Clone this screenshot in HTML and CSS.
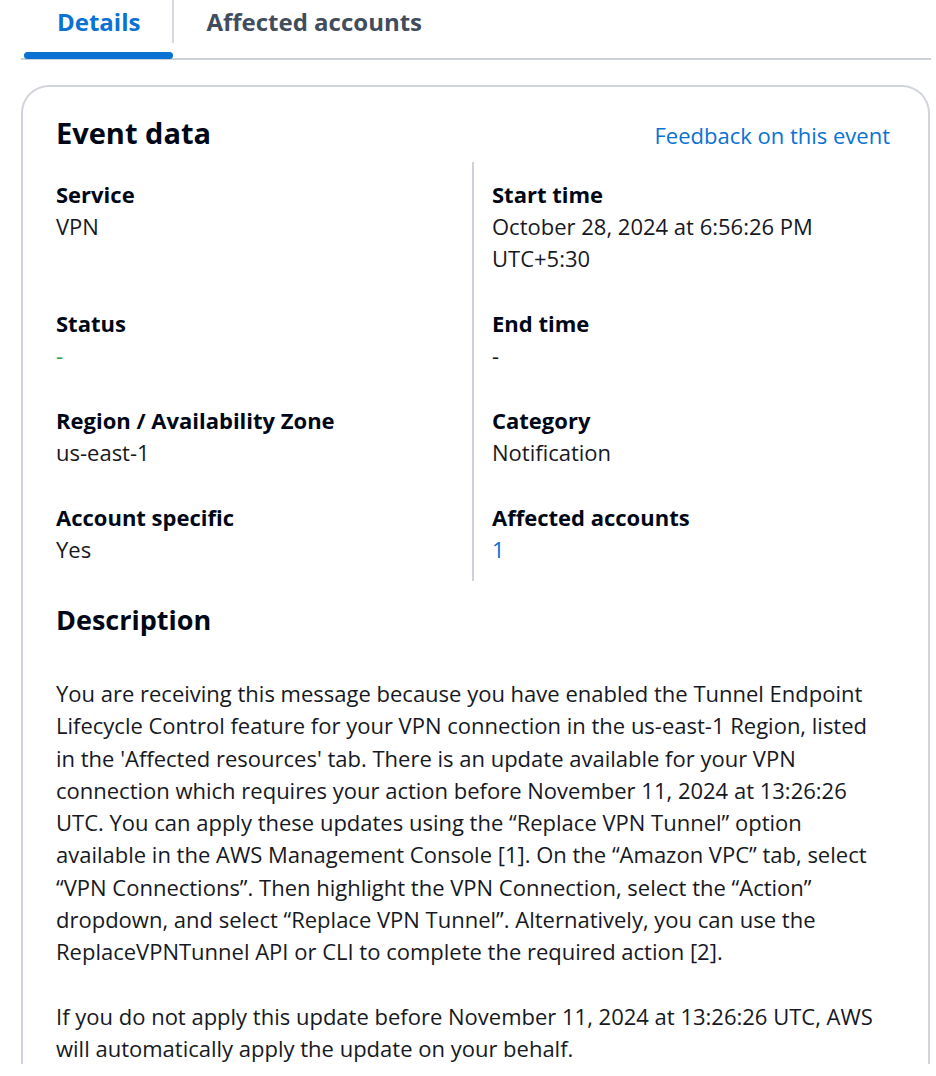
FILE: index.html
```html
<html>

<head>
  <title>Event details</title>
  <link rel="stylesheet" href="styles.css">
</head>

<body>
  <div class="tabs">
    <div class="tab active">Details</div>
    <div class="tab">Affected accounts</div>
  </div>

  <div class="card">
    <div class="card-header">
      <h2>Event data</h2>
      <a class="link" href="#">Feedback on this event</a>
    </div>

    <div class="details">
      <div class="item">
        <div class="label">Service</div>
        <div class="value">VPN</div>
      </div>
      <div class="divider"></div>
      <div class="item">
        <div class="label">Start time</div>
        <div class="value">October 28, 2024 at 6:56:26 PM UTC+5:30</div>
      </div>

      <div class="item">
        <div class="label">Status</div>
        <div class="value status">-</div>
      </div>
      <div class="item">
        <div class="label">End time</div>
        <div class="value">-</div>
      </div>

      <div class="item">
        <div class="label">Region / Availability Zone</div>
        <div class="value">us-east-1</div>
      </div>
      <div class="item">
        <div class="label">Category</div>
        <div class="value">Notification</div>
      </div>

      <div class="item">
        <div class="label">Account specific</div>
        <div class="value">Yes</div>
      </div>
      <div class="item">
        <div class="label">Affected accounts</div>
        <div class="value"><a class="link" href="#">1</a></div>
      </div>
    </div>

    <h3>Description</h3>
    <div class="description">
      <p>You are receiving this message because you have enabled the Tunnel Endpoint Lifecycle Control feature for your VPN connection in the us-east-1 Region, listed in the 'Affected resources' tab. There is an update available for your VPN connection which requires your action before November 11, 2024 at 13:26:26 UTC. You can apply these updates using the “Replace VPN Tunnel” option available in the AWS Management Console [1]. On the “Amazon VPC” tab, select “VPN Connections”. Then highlight the VPN Connection, select the “Action” dropdown, and select “Replace VPN Tunnel”. Alternatively, you can use the ReplaceVPNTunnel API or CLI to complete the required action [2].</p>
      <p>If you do not apply this update before November 11, 2024 at 13:26:26 UTC, AWS will automatically apply the update on your behalf.</p>
    </div>
  </div>
</body>

</html>
```

FILE: styles.css
```css
body {
  margin: 0;
  font-family: "Open Sans", "Noto Sans", sans-serif;
  font-size: 22px;
  color: #16191f;
  background: #fff;
}

.tabs {
  display: flex;
  margin-left: 21px;
  width: 910px;
  padding-left: 3px;
  box-sizing: border-box;
  border-bottom: 2px solid #cdd1d8;
}

.tab {
  position: relative;
  height: 58px;
  padding: 0 33px;
  font-size: 24px;
  font-weight: 700;
  color: #414d5c;
  line-height: 44px;
}

.tab.active {
  color: #0972d3;
}

.tab.active::before {
  content: "";
  position: absolute;
  right: -1px;
  top: 0;
  height: 43px;
  border-right: 2px solid #d5d9de;
}

.tab.active::after {
  content: "";
  position: absolute;
  left: 0;
  right: 0;
  bottom: -1px;
  height: 7px;
  border-radius: 4px;
  background: #0972d3;
}

.card {
  margin: 25px 0 0 21px;
  width: 909px;
  box-sizing: border-box;
  border: 2px solid #d1d5db;
  border-bottom: none;
  border-radius: 28px 28px 0 0;
  padding: 26px 38px 0 33px;
}

.card-header {
  display: flex;
  justify-content: space-between;
  align-items: baseline;
  height: 49px;
}

h2 {
  margin: 0;
  font-size: 29px;
  font-weight: 700;
  color: #000716;
  line-height: 40px;
}

.link {
  color: #0972d3;
  text-decoration: none;
}

.details {
  display: grid;
  grid-template-columns: 1fr 2px 1fr;
  column-gap: 18px;
  row-gap: 33px;
  padding: 16px 0 16px;
}

.divider {
  grid-column: 2;
  grid-row: 1 / 5;
  margin: -16px 0 -16px;
  background: #cdd1d8;
}

.item {
  line-height: 32px;
}

.label {
  font-weight: 700;
  color: #000716;
}

.value.status {
  color: #2ea44f;
}

h3 {
  margin: 19px 0 0;
  font-size: 27px;
  font-weight: 700;
  color: #000716;
  line-height: 40px;
}

.description {
  padding-top: 37px;
  line-height: 32.3px;
}

.description p {
  margin: 0 0 32px;
}
```
